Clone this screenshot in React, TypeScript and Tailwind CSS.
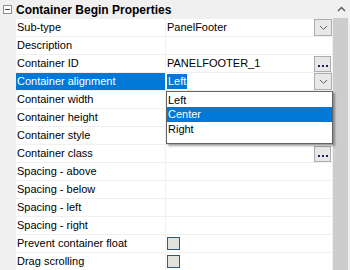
import React from "react";

type Row = {
  name: string;
  value?: string;
  kind?: "dropdown" | "ellipsis" | "checkbox" | "selected";
};

const rows: Row[] = [
  { name: "Sub-type", value: "PanelFooter", kind: "dropdown" },
  { name: "Description" },
  { name: "Container ID", value: "PANELFOOTER_1", kind: "ellipsis" },
  { name: "Container alignment", value: "Left", kind: "selected" },
  { name: "Container width" },
  { name: "Container height" },
  { name: "Container style" },
  { name: "Container class", kind: "ellipsis" },
  { name: "Spacing - above" },
  { name: "Spacing - below" },
  { name: "Spacing - left" },
  { name: "Spacing - right" },
  { name: "Prevent container float", kind: "checkbox" },
  { name: "Drag scrolling", kind: "checkbox" },
];

function Chevron() {
  return (
    <svg width="9" height="6" viewBox="0 0 9 6">
      <path d="M1 1 L4.5 4.5 L8 1" fill="none" stroke="#606060" strokeWidth="1" />
    </svg>
  );
}

function DropBtn() {
  return (
    <div className="w-[18px] h-[17px] border border-[#adadad] bg-[#e8e8e8] flex items-center justify-center shrink-0">
      <Chevron />
    </div>
  );
}

function EllipsisBtn() {
  return (
    <div className="w-[17px] h-[16px] mr-[1px] border border-[#adadad] bg-[#e8e8e8] flex items-end justify-center pb-[4px] gap-[2px] shrink-0">
      <span className="w-[2px] h-[2px] bg-[#202050]" />
      <span className="w-[2px] h-[2px] bg-[#202050]" />
      <span className="w-[2px] h-[2px] bg-[#202050]" />
    </div>
  );
}

export default function App() {
  return (
    <div
      className="w-[350px] h-[270px] overflow-hidden flex bg-[#f0f0f0] text-[11px] text-black relative"
      style={{ fontFamily: '"Liberation Sans", Arial, sans-serif' }}
    >
      <div className="w-[333px] flex flex-col">
        <div className="h-[19px] flex items-center shrink-0">
          <div className="w-[9px] h-[9px] ml-[3px] border border-[#909090] bg-white flex items-center justify-center">
            <span className="w-[5px] h-[1px] bg-[#404040]" />
          </div>
          <span className="ml-[4px] font-bold text-[12px]">Container Begin Properties</span>
        </div>
        {rows.map((r) => (
          <div key={r.name} className="h-[18px] flex shrink-0 border-b border-[#f0f0f0]">
            <div className="w-[16px] shrink-0" />
            <div
              className={
                "w-[149px] shrink-0 pl-[1px] flex items-center whitespace-nowrap " +
                (r.kind === "selected" ? "bg-[#0078d7] text-white" : "bg-white")
              }
            >
              {r.name}
            </div>
            <div className="w-[1px] shrink-0" />
            <div className="flex-1 bg-white flex items-center mr-[1px]">
              {r.kind === "selected" ? (
                <span className="ml-[1px] bg-[#0078d7] text-white h-[15px] flex items-center px-[1px]">{r.value}</span>
              ) : r.kind === "checkbox" ? (
                <span className="ml-[1px] w-[13px] h-[13px] border border-[#2a5a8a] bg-[#e2e2dc]" />
              ) : (
                <span className="ml-[1px]">{r.value}</span>
              )}
              <div className="flex-1" />
              {(r.kind === "dropdown" || r.kind === "selected") && <DropBtn />}
              {r.kind === "ellipsis" && <EllipsisBtn />}
            </div>
          </div>
        ))}
      </div>
      <div className="w-[17px] flex flex-col">
        <div className="h-[18px] flex items-center justify-center shrink-0">
          <svg width="9" height="6" viewBox="0 0 9 6">
            <path d="M1 5 L4.5 1.5 L8 5" fill="none" stroke="#606060" strokeWidth="1.5" />
          </svg>
        </div>
        <div className="flex-1 w-[15px] bg-[#cdcdcd]" />
      </div>
      <div
        className="absolute left-[166px] top-[91px] w-[167px] h-[53px] bg-white border border-[#646464] flex flex-col pt-[1px]"
        style={{ boxShadow: "2px 2px 2px rgba(0,0,0,0.35)" }}
      >
        <div className="h-[14px] flex items-center pl-[1px]">Left</div>
        <div className="h-[15px] flex items-center pl-[1px] bg-[#0078d7] text-white">Center</div>
        <div className="h-[14px] flex items-center pl-[1px]">Right</div>
      </div>
    </div>
  );
}
